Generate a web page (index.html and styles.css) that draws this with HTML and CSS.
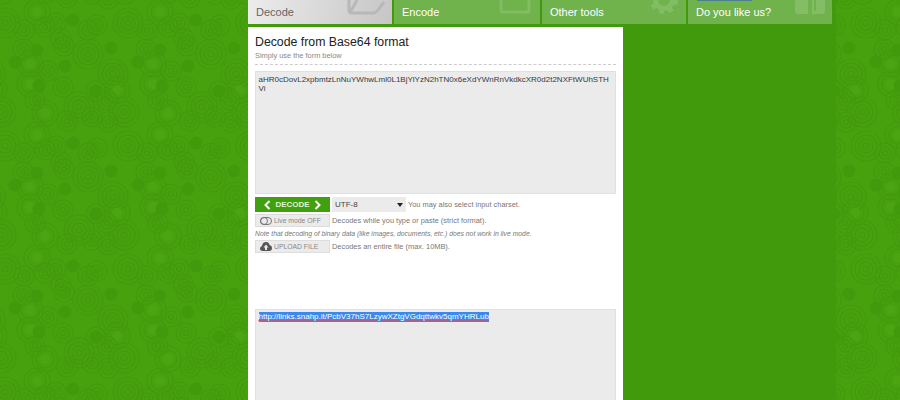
FILE: index.html
```html
<!DOCTYPE html>
<html lang="en">
<head>
  <meta charset="UTF-8">
  <title>Decode from Base64 format</title>
  <link rel="stylesheet" href="styles.css">
</head>

<body>
  <svg class="side side-left" viewBox="0 0 248 400">
    <defs>
      <g id="big" class="rings">
        <circle r="3"></circle><circle r="7"></circle><circle r="11"></circle><circle r="15"></circle>
      </g>
      <g id="mid" class="rings">
        <circle r="2.5"></circle><circle r="6"></circle><circle r="10"></circle>
      </g>
      <circle id="dark" class="spot" r="6.5"></circle>
      <g id="pale" class="rings">
        <circle class="disc" r="5"></circle><circle r="9"></circle><circle r="13"></circle>
      </g>
      <g id="cells">
        <use href="#pale" x="37" y="12"></use>
        <use href="#big" x="5" y="23"></use>
        <use href="#mid" x="24" y="30"></use>
        <use href="#mid" x="45" y="27"></use>
        <use href="#mid" x="56" y="23"></use>
        <use href="#dark" x="73" y="20"></use>
        <use href="#mid" x="88" y="30"></use>
        <use href="#mid" x="97" y="25"></use>
        <use href="#mid" x="23" y="49"></use>
        <use href="#dark" x="37" y="50"></use>
        <use href="#mid" x="61" y="39"></use>
        <use href="#mid" x="64" y="46"></use>
        <use href="#big" x="88" y="54"></use>
        <use href="#dark" x="111" y="48"></use>
        <use href="#dark" x="15" y="62"></use>
        <use href="#pale" x="30" y="64"></use>
        <use href="#mid" x="48" y="71"></use>
        <use href="#dark" x="65" y="66"></use>
        <use href="#big" x="113" y="74"></use>
        <use href="#pale" x="30" y="84"></use>
        <use href="#dark" x="39" y="86"></use>
        <use href="#mid" x="63" y="87"></use>
        <use href="#dark" x="96" y="91"></use>
        <use href="#mid" x="96" y="91"></use>
        <use href="#pale" x="117" y="90"></use>
        <use href="#mid" x="35" y="100"></use>
        <use href="#mid" x="107" y="100"></use>
        <use href="#big" x="79" y="107"></use>
        <use href="#pale" x="45" y="113"></use>
        <use href="#big" x="1" y="112"></use>
        <use href="#mid" x="67" y="121"></use>
        <use href="#mid" x="92" y="117"></use>
        <use href="#mid" x="108" y="122"></use>
      </g>
      <pattern id="swirls" width="123" height="123" patternUnits="userSpaceOnUse">
        <rect class="swirl-base" width="123" height="123"></rect>
        <use href="#cells"></use>
        <use href="#cells" x="-123"></use>
        <use href="#cells" x="123"></use>
        <use href="#cells" y="-123"></use>
        <use href="#cells" y="123"></use>
        <use href="#cells" x="-123" y="-123"></use>
        <use href="#cells" x="123" y="-123"></use>
        <use href="#cells" x="-123" y="123"></use>
        <use href="#cells" x="123" y="123"></use>
      </pattern>
    </defs>
    <rect width="248" height="400" fill="url(#swirls)"></rect>
  </svg>

  <div class="middle">
    <nav class="tabs">
      <a class="tab active">Decode
        <svg class="tab-icon" width="38" height="15" viewBox="0 0 38 15"><path d="M2 0V10Q2 13 5 13H26Q29 13 31 10L37 2M10 0L4 11"></path></svg>
      </a>
      <a class="tab wide">Encode
        <svg class="tab-icon encode-icon" width="32" height="14" viewBox="0 0 32 14"><path d="M2 0V10Q2 12 4 12H28Q30 12 30 10V0"></path></svg>
      </a>
      <a class="tab">Other tools
        <svg class="tab-icon" width="30" height="15" viewBox="0 0 30 15"><circle cx="15" cy="0" r="8.5" stroke-width="5"></circle><circle cx="15" cy="0" r="12.5" stroke-width="3.5" stroke-dasharray="5 4.8"></circle></svg>
      </a>
      <a class="tab"><span class="like-bar"></span>Do you like us?
        <svg class="tab-icon" width="30" height="14" viewBox="0 0 30 14"><path class="solid" d="M0 0H13V14H3Q0 14 0 11ZM17 0H19V11H21V0H30V11Q30 14 27 14H17Z"></path></svg>
      </a>
    </nav>

    <main class="panel">
      <h1>Decode from Base64 format</h1>
      <p class="sub">Simply use the form below</p>

      <div class="field source">aHR0cDovL2xpbmtzLnNuYWhwLml0L1BjYlYzN2hTN0x6eXdYWnRnVkdkcXR0d2t2NXFtWUhSTHVi</div>

      <div class="row">
        <button class="decode-btn">
          <svg width="7" height="10" viewBox="0 0 7 10"><path d="M5.5 1L1.5 5L5.5 9"></path></svg>
          DECODE
          <svg width="7" height="10" viewBox="0 0 7 10"><path d="M1.5 1L5.5 5L1.5 9"></path></svg>
        </button>
        <div class="charset">UTF-8<span class="arrow"></span></div>
        <span class="hint">You may also select input charset.</span>
      </div>

      <div class="row">
        <button class="small-btn">
          <svg width="12" height="8" viewBox="0 0 12 8"><rect x="0.5" y="0.5" width="11" height="7" rx="3.5"></rect><circle cx="4" cy="4" r="3.5"></circle></svg>
          Live mode OFF
        </button>
        <span class="hint">Decodes while you type or paste (strict format).</span>
      </div>

      <p class="note">Note that decoding of binary data (like images, documents, etc.) does not work in live mode.</p>

      <div class="row">
        <button class="small-btn">
          <svg class="cloud" width="12" height="9" viewBox="0 0 12 9"><path d="M3 9Q0 9 0 6.5Q0 4.5 2 4Q2.500 0 6 0Q9 0 9.500 3Q12 3.500 12 6Q12 9 9 9Z"></path><path class="up" d="M6 2.500L8.500 5.500H7V8H5V5.500H3.500Z"></path></svg>
          UPLOAD FILE
        </button>
        <span class="hint">Decodes an entire file (max. 10MB).</span>
      </div>

      <div class="field result"><span class="picked">http://links.snahp.it/PcbV37hS7LzywXZtgVGdqttwkv5qmYHRLub</span></div>
    </main>
  </div>

  <svg class="side side-right" viewBox="836 0 64 400">
    <rect x="836" width="64" height="400" fill="url(#swirls)"></rect>
  </svg>
</body>
</html>
```

FILE: styles.css
```css
* {
  margin: 0;
  padding: 0;
  box-sizing: border-box;
  font-family: "Liberation Sans", Arial, sans-serif;
}

body {
  display: flex;
  width: 900px;
  height: 400px;
  overflow: hidden;
  background: #419a0c;
}

.side {
  display: block;
  flex: none;
  height: 400px;
}

.side-left {
  width: 248px;
}

.side-right {
  width: 64px;
}

.swirl-base {
  fill: #47a00e;
}

.rings circle {
  fill: none;
  stroke: #419a0c;
  stroke-width: 1.2;
}

.rings circle.disc {
  fill: #4ba411;
  stroke: none;
}

.spot {
  fill: #409a0c;
}

.middle {
  width: 588px;
  flex: none;
}

.tabs {
  display: flex;
  gap: 2px;
  height: 24px;
}

.tab {
  position: relative;
  display: flex;
  align-items: center;
  width: 144px;
  height: 24px;
  padding: 0 0 1px 8px;
  font-size: 11px;
  color: #fff;
  background: #70b24c;
  overflow: hidden;
}

.tab.wide {
  width: 146px;
}

.tab.active {
  color: #666;
  background: linear-gradient(100deg, #ececec 0%, #c6c6c6 100%);
}

.tab-icon {
  position: absolute;
  top: 0;
  right: 7px;
  fill: none;
  stroke: rgba(255, 255, 255, 0.13);
  stroke-width: 3;
}

.encode-icon {
  right: 9px;
}

.tab.active .tab-icon {
  stroke: #b8b8b8;
}

.tab-icon .solid {
  fill: rgba(255, 255, 255, 0.15);
  stroke: none;
}

.like-bar {
  position: absolute;
  top: 0;
  left: 9px;
  width: 55px;
  height: 1px;
  background: #4c7f8c;
}

.panel {
  width: 375px;
  height: 373px;
  margin-top: 3px;
  padding: 8px 7px 0;
  overflow: hidden;
  background: #fff;
}

.panel h1 {
  font-size: 12.3px;
  line-height: 14px;
  font-weight: normal;
  color: #222;
}

.sub {
  font-size: 7.4px;
  line-height: 11px;
  margin-top: 1px;
  padding-bottom: 3px;
  color: #888;
  border-bottom: 1px dashed #ccc;
}

.field {
  width: 361px;
  padding: 3px 3px 3px 2.500px;
  font-size: 8px;
  line-height: 9px;
  color: #35393d;
  word-break: break-all;
  background: #ebebeb;
  border: 1px solid #e0e0e0;
}

.source {
  height: 123px;
  margin-top: 6px;
  margin-bottom: 3px;
}

.result {
  height: 100px;
  margin-top: 56px;
  line-height: 10px;
  padding-top: 2px;
}

.picked {
  display: inline-block;
  height: 10px;
  color: #fff;
  background: #3a88f0;
  text-decoration: underline dotted rgba(226, 67, 74, 0.6) 1px;
  text-underline-offset: 1px;
}

.row {
  display: flex;
  align-items: center;
  gap: 2px;
  margin-bottom: 2px;
}

.decode-btn {
  display: flex;
  align-items: center;
  justify-content: space-between;
  width: 75px;
  height: 15px;
  padding: 0 9px;
  font-size: 8px;
  font-weight: bold;
  color: #dff3d0;
  background: #41a00d;
  border: none;
}

.decode-btn svg {
  fill: none;
  stroke: #fff;
  stroke-width: 2;
}

.charset {
  display: flex;
  align-items: center;
  justify-content: space-between;
  width: 74px;
  height: 15px;
  padding: 0 3px;
  font-size: 8px;
  color: #444;
  background: #ebebeb;
}

.arrow {
  width: 0;
  height: 0;
  border: 3px solid transparent;
  border-top: 4px solid #222;
  border-bottom: none;
}

.hint {
  font-size: 7.4px;
  color: #777;
}

.small-btn {
  display: flex;
  align-items: center;
  gap: 2px;
  width: 75px;
  height: 13px;
  padding-left: 4px;
  font-size: 6.8px;
  white-space: nowrap;
  color: #888;
  background: #ebebeb;
  border: 1px solid #ddd;
}

.small-btn svg {
  fill: none;
  stroke: #777;
  stroke-width: 1;
}

.small-btn .cloud {
  fill: #555;
  stroke: none;
}

.cloud .up {
  fill: #ebebeb;
}

.note {
  font-size: 6.8px;
  line-height: 9px;
  margin-bottom: 2px;
  font-style: italic;
  color: #777;
}
```
